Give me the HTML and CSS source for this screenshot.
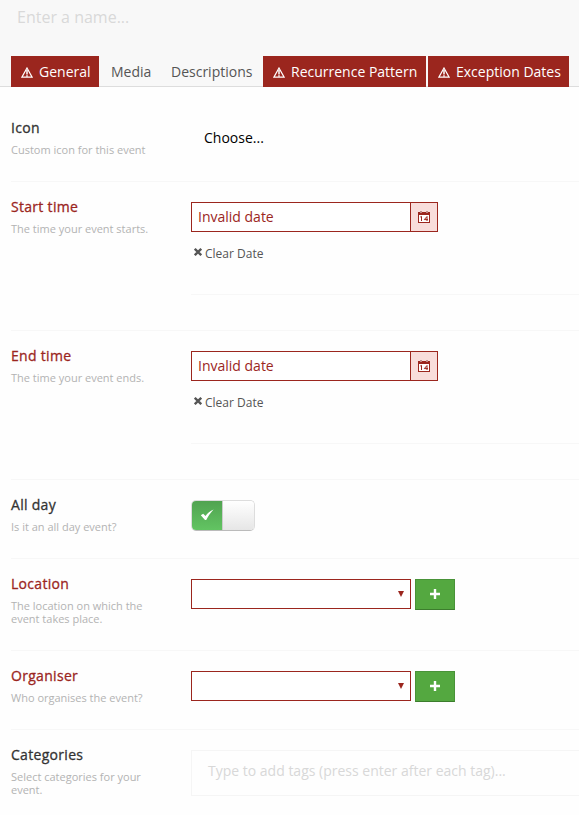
FILE: index.html
```
<!DOCTYPE html>
<html lang="en">
<head>
<meta charset="utf-8">
<title>Event</title>
<link rel="stylesheet" href="styles.css">
</head>
<body>
<svg class="defs" width="0" height="0">
  <symbol id="warn" viewBox="0 0 12 11"><path d="M6 1 11.1 10.2H.9Z" fill="none" stroke="currentColor" stroke-width="1.2"/><path d="M6 3V7.6M6 8.2V9.8" stroke="currentColor" stroke-width="1.5"/></symbol>
  <symbol id="cal" viewBox="0 0 12 12"><path d="M0 1H2V0H4V1H8V0H10V1H12V12H0Z" fill="currentColor"/><path d="M2 0H4V2H2ZM8 0H10V2H8Z" fill="#c08a86"/><path d="M1 4H11V11H1Z" fill="#fff"/><path d="M2.3 6 3.5 5.4V10M9 10V5.5L6.3 8.6H10" fill="none" stroke="currentColor" stroke-width="1"/></symbol>
  <symbol id="cross" viewBox="0 0 8 8"><path d="M.8 .8 7.2 7.2M7.2 .8 .8 7.2" stroke="currentColor" stroke-width="2.3"/></symbol>
  <symbol id="plus" viewBox="0 0 10 10"><path d="M5 0V10M0 5H10" stroke="currentColor" stroke-width="2.4"/></symbol>
</svg>
<header class="header">
  <div class="name">Enter a name...</div>
  <nav class="tabs">
    <a class="tab error active"><svg class="warn"><use href="#warn"/></svg><span>General</span></a>
    <a class="tab media">Media</a>
    <a class="tab desc">Descriptions</a>
    <a class="tab error recur"><svg class="warn"><use href="#warn"/></svg><span>Recurrence Pattern</span></a>
    <a class="tab error exc"><svg class="warn"><use href="#warn"/></svg><span>Exception Dates</span></a>
  </nav>
</header>
<main class="form">
  <section class="row">
    <div class="info"><h3>Icon</h3><p>Custom icon for this event</p></div>
    <div class="field"><div class="choose">Choose...</div></div>
  </section>
  <section class="row date invalid">
    <div class="info"><h3>Start time</h3><p>The time your event starts.</p></div>
    <div class="field dated">
      <div class="group"><div class="input">Invalid date</div><div class="addon"><svg class="cal"><use href="#cal"/></svg></div></div>
      <div class="clear"><svg class="cross"><use href="#cross"/></svg>Clear Date</div>
    </div>
  </section>
  <section class="row date invalid">
    <div class="info"><h3>End time</h3><p>The time your event ends.</p></div>
    <div class="field dated">
      <div class="group"><div class="input">Invalid date</div><div class="addon"><svg class="cal"><use href="#cal"/></svg></div></div>
      <div class="clear"><svg class="cross"><use href="#cross"/></svg>Clear Date</div>
    </div>
  </section>
  <section class="row">
    <div class="info"><h3>All day</h3><p>Is it an all day event?</p></div>
    <div class="field"><div class="switch"><div class="on"><svg class="check" viewBox="0 0 14 12"><path d="M.8 6.2 3.2 4.7 5.5 7C7.5 4.2 10 1.8 13.6.4 10.5 3.6 8.2 7 6.2 11H5Z" fill="#fff"/></svg></div><div class="knob"></div></div></div>
  </section>
  <section class="row tall invalid">
    <div class="info"><h3>Location</h3><p>The location on which the event takes place.</p></div>
    <div class="field pick"><div class="select"><svg class="arrow" viewBox="0 0 6 6"><path d="M0 0H6L3 6Z" fill="currentColor"/></svg></div><div class="add"><svg class="plus"><use href="#plus"/></svg></div></div>
  </section>
  <section class="row invalid">
    <div class="info"><h3>Organiser</h3><p>Who organises the event?</p></div>
    <div class="field pick"><div class="select"><svg class="arrow" viewBox="0 0 6 6"><path d="M0 0H6L3 6Z" fill="currentColor"/></svg></div><div class="add"><svg class="plus"><use href="#plus"/></svg></div></div>
  </section>
  <section class="row last">
    <div class="info"><h3>Categories</h3><p>Select categories for your event.</p></div>
    <div class="field"><div class="tags">Type to add tags (press enter after each tag)...</div></div>
  </section>
</main>
</body>
</html>
```

FILE: styles.css
```
* { box-sizing: border-box; }
body { margin: 0; height: 815px; overflow: hidden; background: #fefefe; font: 14px/20px "Open Sans", sans-serif; color: #333; }
svg { display: block; flex: none; }
.defs { height: 0; }
.header { height: 87px; background: #f8f8f8; border-bottom: 1px solid #ddd; display: flex; flex-direction: column; justify-content: space-between; }
.name { padding: 6px 17px; font-size: 16px; line-height: 22px; color: #d9d9d9; }
.tabs { display: flex; height: 31px; margin: 0 0 -1px 11px; line-height: 31px; white-space: nowrap; color: #555; }
.tab { display: flex; align-items: center; }
.error { background: #9b261e; color: #fff; padding-left: 10px; gap: 6px; }
.active { width: 88px; }
.media { width: 60px; padding-left: 12px; }
.desc { width: 104px; padding-left: 12px; }
.recur { width: 163px; margin-right: 2px; }
.exc { width: 141px; }
.warn { width: 12px; height: 11px; margin-top: 1px; }
.form { padding: 16px 0 0 11px; }
.row { display: flex; height: 79px; border-bottom: 1px solid #f7f7f7; padding-top: 15px; }
.date { height: 149px; }
.tall { height: 92px; }
.last { border: 0; height: 85px; }
.info { width: 180px; flex: none; }
.info h3 { margin: 0; font-size: 14px; font-weight: 400; letter-spacing: 0.3px; -webkit-text-stroke: 0.3px currentColor; line-height: 20px; }
.info p { margin: 5px 0 0; width: 150px; font-size: 11px; line-height: 13px; color: #b3b3b3; }
.invalid h3 { color: #9b261e; }
.field { flex: 1; padding-top: 5px; }
.choose { padding: 5px 13px; color: #000; }
.dated { height: 98px; border-bottom: 1px solid #f7f7f7; }
.group { display: flex; width: 247px; height: 30px; border: 1px solid #9b261e; color: #9b261e; }
.input { flex: 1; padding-left: 6px; line-height: 28px; background: #fff; }
.addon { width: 27px; border-left: 1px solid #9b261e; background: #f8dddb; display: flex; align-items: center; justify-content: center; }
.cal { width: 12px; height: 12px; }
.clear { display: flex; align-items: center; margin-top: 12px; padding-left: 3px; font-size: 12px; color: #555; }
.cross { width: 8px; height: 8px; margin: -4px 3px 0 0; }
.switch { display: flex; width: 64px; height: 31px; border: 1px solid #ddd; border-bottom-color: #bbb; border-radius: 5px; overflow: hidden; }
.on { width: 30px; background: linear-gradient(#51a351, #62c462); display: flex; align-items: center; justify-content: center; padding-bottom: 1px; }
.check { width: 14px; height: 12px; }
.knob { flex: 1; border-left: 1px solid #ccc; background: linear-gradient(#fff, #e6e6e6); }
.pick { display: flex; gap: 4px; }
.select { width: 220px; height: 30px; border: 1px solid #9b261e; background: #fff; color: #9b261e; display: flex; justify-content: flex-end; align-items: center; padding-right: 6px; }
.arrow { width: 6px; height: 6px; }
.add { width: 40px; height: 31px; border: 1px solid #499338; border-bottom-color: #3c7d2d; background: #54a840; color: #fff; display: flex; align-items: center; justify-content: center; padding-bottom: 1px; }
.plus { width: 10px; height: 10px; }
.tags { height: 46px; border: 1px solid #f5f5f5; border-right: 0; padding-left: 16px; line-height: 40px; color: #d8d8d8; }
```
